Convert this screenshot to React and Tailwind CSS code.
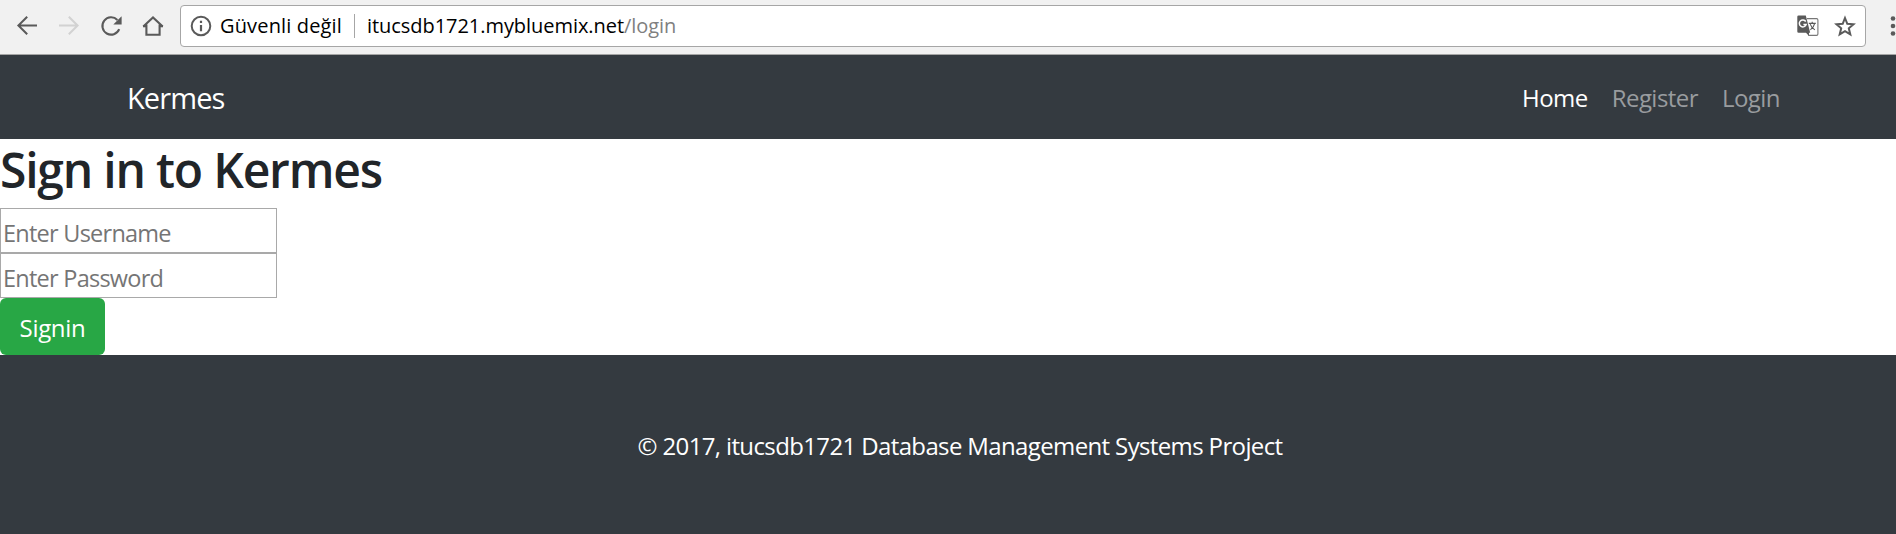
const ink = "#5a5a5a";

function Arrow({ color, flip }) {
  return (
    <svg width="22" height="22" viewBox="0 0 22 22" fill="none" stroke={color} strokeWidth="2" className={flip ? "-scale-x-100" : ""}>
      <path d="M21 10.500H3M11.200 1.700L2.400 10.500l8.800 8.800" />
    </svg>
  );
}

function Reload() {
  return (
    <svg width="22" height="22" viewBox="0 0 22 22" fill="none">
      <path d="M17.4 4.9A8.7 8.7 0 1 0 19.2 14.2" stroke={ink} strokeWidth="2.1" />
      <path d="M21.6 1.2v8.3h-8.3z" fill={ink} />
    </svg>
  );
}

function Home() {
  return (
    <svg width="22" height="22" viewBox="0 0 22 22" fill="none" stroke={ink} strokeWidth="2.1">
      <path d="M1.3 11.4L11 2.400l9.7 9M4.4 9.5v10.300h13.2V9.5" />
      <path d="M1 11.2h3.4M17.6 11.2H21" />
    </svg>
  );
}

function Info() {
  return (
    <svg width="22" height="22" viewBox="0 0 22 22" fill="none">
      <circle cx="11" cy="11" r="9.3" stroke={ink} strokeWidth="2" />
      <path d="M11 10v6.2M11 5.8v2.2" stroke={ink} strokeWidth="2.2" />
    </svg>
  );
}

function Translate() {
  return (
    <svg width="22" height="22" viewBox="0 0 22 22" fill="none">
      <path d="M10 3.6h9.6a1.3 1.3 0 0 1 1.3 1.3v14.2a1.3 1.3 0 0 1-1.3 1.3h-8.2" stroke="#777" strokeWidth="1.1" />
      <path d="M1.6.4h7.2l4.4 17.4h-1.2v3.3L9 17.8H1.6A1.3 1.3 0 0 1 .3 16.500V1.700A1.3 1.3 0 0 1 1.600.4z" fill={ink} />
      <path d="M8.800 6.500A3.500 3.500 0 1 0 9.200 9.400H6.400" stroke="#fff" strokeWidth="1.500" />
      <path d="M11.800 8.400h7M15.200 6.800v1.600M17.600 8.600c-.6 2.600-2.400 5-4.200 6.200M13.200 9.200c.8 2.400 2.600 4.400 4.700 5.700" stroke={ink} strokeWidth="1.100" />
    </svg>
  );
}

function Star() {
  return (
    <svg width="22" height="22" viewBox="0 0 22 22" fill="none" stroke={ink} strokeWidth="2">
      <path d="M11 3l2.300 5.800 6.200.5-4.700 4 1.500 6.100L11 16.100l-5.300 3.300 1.500-6.100-4.700-4 6.200-.5z" />
    </svg>
  );
}

export default function App() {
  return (
    <div className="flex h-[534px] w-[1896px] flex-col overflow-hidden bg-white font-['Open_Sans',sans-serif] text-[24px] whitespace-nowrap">
      <div className="flex h-[55px] shrink-0 items-start border-b border-[#a5a5a5] bg-[#f1f1f1] text-[20px]">
        <div className="flex w-[180px] shrink-0 gap-5 pt-[15px] pl-4">
          <Arrow color={ink} />
          <Arrow color="#d2d2d2" flip />
          <Reload />
          <Home />
        </div>
        <div className="mt-[5px] flex h-[42px] w-[1686px] shrink-0 items-center rounded-[4px] border border-[#a6a6a6] bg-white pl-[9px] text-black">
          <Info />
          <span className="ml-2 w-[134px] tracking-[0.15px]">Güvenli değil</span>
          <span className="h-6 w-px bg-[#a6a6a6]" />
          <span className="ml-3 tracking-[-0.05px]">itucsdb1721.mybluemix.net<span className="text-[#808080]">/login</span></span>
          <div className="ml-auto flex gap-[15px] pr-[9px]">
            <Translate />
            <Star />
          </div>
        </div>
        <svg width="7" height="22" viewBox="0 0 7 22" className="mt-[15px] ml-[23px] shrink-0" fill={ink}>
          <circle cx="4" cy="3.500" r="2.300" />
          <circle cx="4" cy="11" r="2.300" />
          <circle cx="4" cy="18.500" r="2.300" />
        </svg>
      </div>

      <nav className="flex h-[84px] shrink-0 items-center bg-[#343a40] pr-[116px] pl-[127px] text-[#999c9f]">
        <span className="pt-0.5 text-[29px] leading-[46px] tracking-[-0.9px] text-white">Kermes</span>
        <div className="ml-auto flex gap-6 pt-0.5 tracking-[-0.55px]">
          <span className="text-white">Home</span>
          <span>Register</span>
          <span>Login</span>
        </div>
      </nav>

      <main className="h-[216px] shrink-0">
        <h2 className="h-[69px] text-[48px] leading-[61px] font-semibold tracking-[-1.2px] text-[#212529]">Sign in to Kermes</h2>
        <input className="block h-[45px] w-[277px] border border-[#a9a9a9] px-0.5 pt-1 text-[23.5px] tracking-[-0.75px] placeholder:text-[#757575]" placeholder="Enter Username" />
        <input className="block h-[45px] w-[277px] border border-[#a9a9a9] px-0.5 pt-1 text-[23.5px] tracking-[-0.75px] placeholder:text-[#757575]" placeholder="Enter Password" type="password" />
        <button className="block h-[57px] w-[105px] rounded-[6px] bg-[#28a745] pt-[3px] tracking-[-0.3px] text-white">Signin</button>
      </main>

      <footer className="flex flex-1 justify-center bg-[#343a40] pt-[73px] pl-6 text-white">
        <p className="tracking-[-0.63px]">© 2017, itucsdb1721 Database Management Systems Project</p>
      </footer>
    </div>
  );
}
